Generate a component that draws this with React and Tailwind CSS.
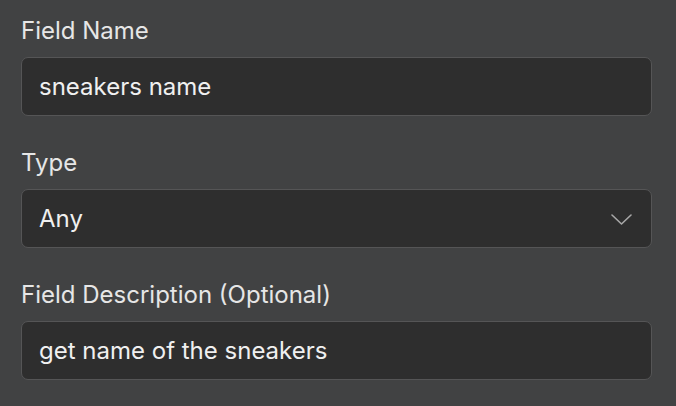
function Field({ label, children }) {
  return (
    <div className="flex flex-col">
      <label className="h-[30px] leading-[30px] text-[24px] text-[#e6e6e6]">{label}</label>
      <div className="mt-[11px]">{children}</div>
    </div>
  );
}

function TextBox({ value }) {
  return (
    <div className="h-[59px] flex items-center pl-[17px] rounded-[7px] bg-[#2e2e2e] border border-[#555556] text-[24px] text-[#f0f0f0]">
      {value}
    </div>
  );
}

export default function App() {
  return (
    <div
      className="w-[676px] h-[406px] overflow-hidden bg-[#414243] pl-[21px] pr-[24px] pt-[16px] flex flex-col gap-[32px]"
      style={{ fontFamily: 'Inter, "Noto Sans", sans-serif' }}
    >
      <Field label="Field Name">
        <TextBox value="sneakers name" />
      </Field>
      <Field label="Type">
        <div className="h-[59px] flex items-center justify-between pl-[17px] pr-[19px] rounded-[7px] bg-[#2e2e2e] border border-[#555556] text-[24px] text-[#f0f0f0]">
          <span>Any</span>
          <svg width="21" height="11" viewBox="0 0 21 11" fill="none" className="mt-[1px]">
            <polyline points="1,1 10.5,10 20,1" stroke="#a8a8a8" strokeWidth="1.6" strokeLinecap="round" strokeLinejoin="round" />
          </svg>
        </div>
      </Field>
      <Field label="Field Description (Optional)">
        <TextBox value="get name of the sneakers" />
      </Field>
    </div>
  );
}
